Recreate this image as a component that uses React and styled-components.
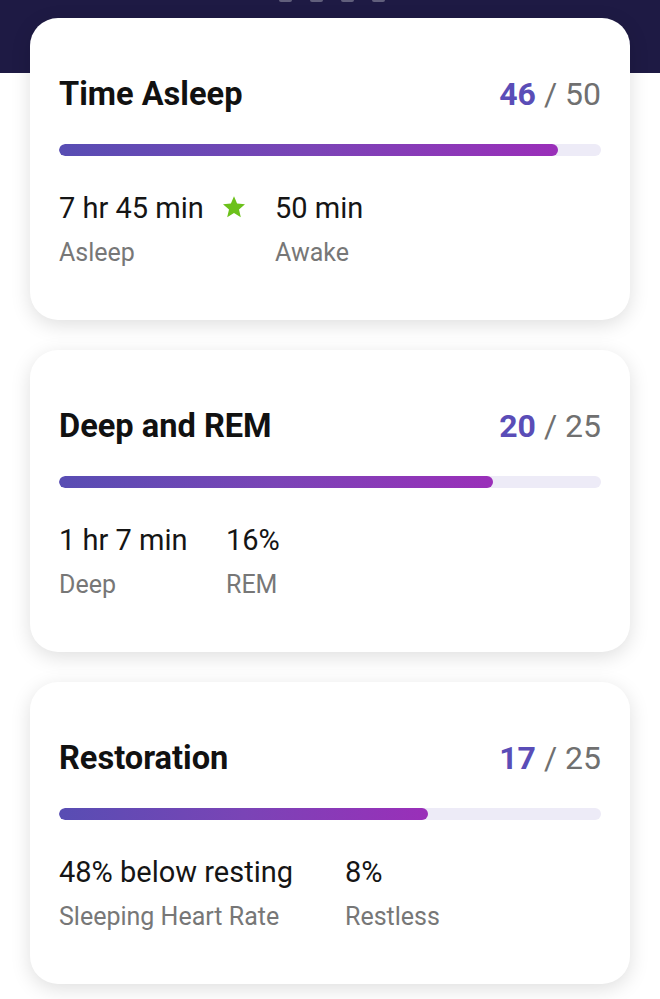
import styled, { createGlobalStyle } from 'styled-components';

const GlobalStyle = createGlobalStyle`
  body {
    margin: 0;
    background: #ffffff;
    font-family: Roboto, "Liberation Sans", sans-serif;
  }
`;

const Page = styled.div`
  width: 660px;
  min-height: 999px;
  background: #ffffff;
  overflow: hidden;
`;

const Header = styled.header`
  height: 73px;
  background: #1e1a44;
  display: flex;
  justify-content: center;
  gap: 18px;
  padding-left: 4px;
`;

// bottoms of the big score glyphs that are scrolled out of view
const Peek = styled.span`
  width: 13px;
  height: 2px;
  border-radius: 0 0 7px 7px;
  background: rgba(255, 255, 255, 0.3);
`;

const CardList = styled.main`
  position: relative;
  margin-top: -55px;
  padding: 0 30px 40px;
  display: flex;
  flex-direction: column;
  gap: 30px;
`;

const Card = styled.section`
  background: #ffffff;
  border-radius: 28px;
  padding: 57px 29px 53px;
  box-shadow: 0 5px 20px rgba(0, 0, 0, 0.13);
`;

const TitleRow = styled.div`
  display: flex;
  justify-content: space-between;
  align-items: baseline;
  height: 38px;
`;

const Title = styled.h2`
  margin: 0;
  font-size: 32.6px;
  font-weight: 700;
  color: #111111;
  line-height: 38px;
`;

const Score = styled.div`
  font-size: 32px;
  color: #707070;
  line-height: 38px;

  b {
    color: #5a4db7;
    font-weight: 700;
  }
`;

const Track = styled.div`
  margin-top: 31px;
  height: 12px;
  border-radius: 6px;
  background: #edebf7;
  overflow: hidden;
`;

const Fill = styled.div`
  height: 100%;
  border-radius: 6px;
  background: linear-gradient(90deg, #584db3 0%, #7a44b6 50%, #9a2fb9 100%);
`;

const Stats = styled.div`
  margin-top: 35px;
  display: flex;
`;

const Stat = styled.div`
  width: ${(p) => (p.$width ? `${p.$width}px` : 'auto')};
  flex: none;
  display: flex;
  flex-direction: column;
  gap: 13px;
`;

const Value = styled.div`
  display: flex;
  align-items: center;
  font-size: 29px;
  color: #151515;
  line-height: 34px;
  height: 34px;
`;

const Label = styled.div`
  font-size: 25px;
  color: #777777;
  line-height: 29px;
`;

const Star = () => (
  <svg width="24" height="24" viewBox="0 0 24 24" style={{ marginLeft: 18, marginTop: -3 }}>
    <path
      d="M12 1.2l3.1 7.3 7.9.7-6 5.2 1.8 7.8L12 18.1l-6.8 4.1 1.8-7.8-6-5.2 7.9-.7z"
      fill="#6cc11b"
    />
  </svg>
);

const cards = [
  {
    title: 'Time Asleep',
    score: 46,
    max: 50,
    firstWidth: 216,
    stats: [
      { value: '7 hr 45 min', label: 'Asleep', star: true },
      { value: '50 min', label: 'Awake' },
    ],
  },
  {
    title: 'Deep and REM',
    score: 20,
    max: 25,
    firstWidth: 167,
    stats: [
      { value: '1 hr 7 min', label: 'Deep' },
      { value: '16%', label: 'REM' },
    ],
  },
  {
    title: 'Restoration',
    score: 17,
    max: 25,
    firstWidth: 286,
    stats: [
      { value: '48% below resting', label: 'Sleeping Heart Rate' },
      { value: '8%', label: 'Restless' },
    ],
  },
];

export default function App() {
  return (
    <Page>
      <GlobalStyle />
      <Header>
        <Peek />
        <Peek />
        <Peek />
        <Peek />
      </Header>
      <CardList>
        {cards.map((c) => (
          <Card key={c.title}>
            <TitleRow>
              <Title>{c.title}</Title>
              <Score>
                <b>{c.score}</b> / {c.max}
              </Score>
            </TitleRow>
            <Track>
              <Fill style={{ width: `${(c.score / c.max) * 100}%` }} />
            </Track>
            <Stats>
              {c.stats.map((s, i) => (
                <Stat key={s.label} $width={i === 0 ? c.firstWidth : undefined}>
                  <Value>
                    {s.value}
                    {s.star && <Star />}
                  </Value>
                  <Label>{s.label}</Label>
                </Stat>
              ))}
            </Stats>
          </Card>
        ))}
      </CardList>
    </Page>
  );
}
